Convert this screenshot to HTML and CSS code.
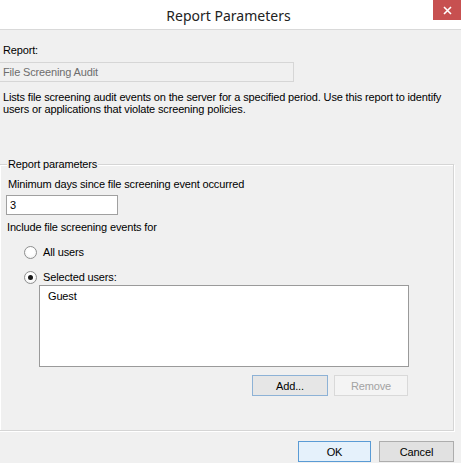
FILE: index.html
```html
<!DOCTYPE html>
<html>
<head>
<meta charset="utf-8">
<link rel="stylesheet" href="styles.css">
</head>
<body>
<div class="window">
  <div class="titlebar">
    <span class="title">Report Parameters</span>
    <div class="close"><svg width="9" height="9" viewBox="0 0 9 9"><path d="M1 1L8 8M8 1L1 8" stroke="#fff" stroke-width="1.6"/></svg></div>
  </div>
  <div class="content">
    <div class="label first">Report:</div>
    <div class="readonly">File Screening Audit</div>
    <div class="desc">Lists file screening audit events on the server for a specified period. Use this report to identify<br>users or applications that violate screening policies.</div>
    <div class="group">
      <div class="legend">Report parameters</div>
      <div class="label min">Minimum days since file screening event occurred</div>
      <div class="input">3</div>
      <div class="label include">Include file screening events for</div>
      <div class="radio r1"><span class="circle"></span><span>All users</span></div>
      <div class="radio r2"><span class="circle checked"></span><span>Selected users:</span></div>
      <div class="users">
        <div class="listbox"><div class="item">Guest</div></div>
        <div class="btnrow">
          <div class="btn add">Add...</div>
          <div class="btn disabled">Remove</div>
        </div>
      </div>
    </div>
    <div class="footer">
      <div class="btn ok">OK</div>
      <div class="btn cancel">Cancel</div>
    </div>
  </div>
</div>
</body>
</html>
```
FILE: styles.css
```css
* { box-sizing: border-box; }
html, body { margin: 0; padding: 0; }
body {
  background: #f0f0f0;
  width: 461px;
  height: 463px;
  overflow: hidden;
  font-family: "Liberation Sans", Arial, sans-serif;
  font-size: 11px;
  letter-spacing: -0.15px;
  color: #000;
}
.window { width: 461px; height: 463px; }
.titlebar {
  position: relative;
  height: 30px;
  background: #fff;
  border-bottom: 1px solid #d9d9d9;
  display: flex;
  justify-content: center;
  align-items: center;
}
.title {
  font-family: "Noto Sans", "Open Sans", sans-serif;
  font-size: 14px;
  letter-spacing: 0;
  color: #222;
  margin-left: -4px;
  margin-top: 1px;
}
.close {
  position: absolute;
  top: 0;
  right: 0;
  width: 28px;
  height: 20px;
  background: #c75050;
  display: flex;
  align-items: center;
  justify-content: center;
}
.content { padding-left: 3px; }
.label { line-height: 13px; height: 13px; white-space: nowrap; }
.label.first { margin-top: 14px; }
.readonly {
  margin-top: 5px;
  margin-left: -4px;
  width: 295px;
  height: 20px;
  border: 1px solid #d6d6d6;
  background: #f0f0f0;
  color: #6d6d6d;
  padding-left: 3px;
  line-height: 18px;
}
.desc {
  margin-top: 9px;
  line-height: 12px;
  white-space: nowrap;
}
.group {
  margin-top: 49px;
  margin-left: -4px;
  width: 455px;
  height: 267px;
  border: 1px solid #d5d5d5;
  box-shadow: inset 1px 1px 0 #fff, 1px 1px 0 #fff;
  padding-left: 7px;
}
.legend {
  width: fit-content;
  margin-top: -7px;
  line-height: 13px;
  padding: 0 1px;
  background: #f0f0f0;
}
.label.min { margin-top: 7px; padding-left: 1px; }
.input {
  margin-top: 4px;
  margin-left: -1px;
  width: 112px;
  height: 20px;
  background: #fff;
  border: 1px solid #a0a0a0;
  padding-left: 3px;
  line-height: 18px;
}
.label.include { margin-top: 6px; }
.radio {
  display: flex;
  align-items: center;
  height: 16px;
  margin-left: 17px;
  gap: 6px;
}
.radio.r1 { margin-top: 10px; }
.radio.r2 { margin-top: 9px; }
.circle {
  width: 13px;
  height: 13px;
  border-radius: 50%;
  border: 1px solid #8e8f8f;
  background: radial-gradient(circle at 50% 40%, #fff 40%, #ececec 100%);
  display: flex;
  align-items: center;
  justify-content: center;
}
.circle.checked::after {
  content: "";
  width: 5px;
  height: 5px;
  border-radius: 50%;
  background: #1a1a1a;
}
.users { margin-left: 32px; width: 370px; }
.listbox {
  height: 82px;
  background: #fff;
  border: 1px solid #9a9a9a;
  padding: 4px 8px;
  line-height: 13px;
}
.btnrow {
  margin-top: 8px;
  display: flex;
  justify-content: flex-end;
  gap: 6px;
  padding-right: 1px;
}
.btn {
  height: 21px;
  display: flex;
  align-items: center;
  justify-content: center;
  border: 1px solid #adadad;
  background: #e1e1e1;
}
.btn.add { width: 76px; border-color: #8db2d6; background: #e6e6e6; }
.btn.disabled { width: 74px; border-color: #d9d9d9; background: #f4f4f4; color: #a3a3a3; }
.footer {
  margin-top: 10px;
  display: flex;
  justify-content: flex-end;
  gap: 8px;
  padding-right: 7px;
}
.btn.ok { width: 73px; border-color: #5a9bd5; background: #e5f1fb; }
.btn.cancel { width: 75px; }
```
